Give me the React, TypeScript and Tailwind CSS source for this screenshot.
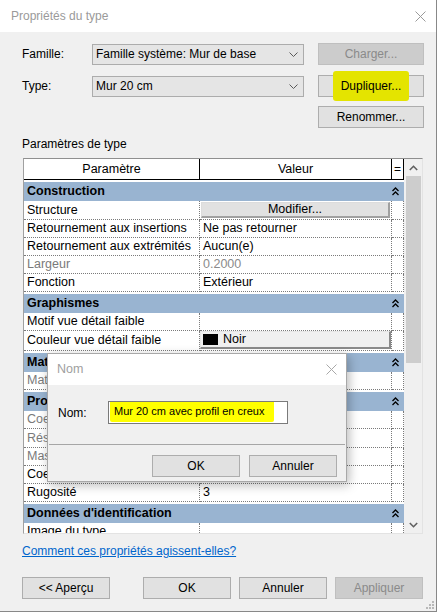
import React from 'react'

// petites icônes dessinées à la main
const CloseX = ({ color = '#9a9a9a' }: { color?: string }) => (
  <svg width="11" height="11" viewBox="0 0 11 11">
    <path d="M0.5 0.5 L10.5 10.5 M10.5 0.5 L0.5 10.5" stroke={color} strokeWidth="1" fill="none" />
  </svg>
)

const ChevronDown = () => (
  <svg width="9" height="5" viewBox="0 0 9 5">
    <path d="M0.5 0.5 L4.5 4.5 L8.5 0.5" stroke="#5a5a5a" strokeWidth="1" fill="none" />
  </svg>
)

const DoubleUp = () => (
  <svg width="7" height="9" viewBox="0 0 7 9">
    <path d="M0.5 4 L3.5 1 L6.5 4 M0.5 8 L3.5 5 L6.5 8" stroke="#000" strokeWidth="1.3" fill="none" />
  </svg>
)

const ScrollArrow = ({ up }: { up?: boolean }) => (
  <svg width="9" height="6" viewBox="0 0 9 6">
    <path d={up ? 'M0.8 5 L4.5 1.3 L8.2 5' : 'M0.8 1 L4.5 4.7 L8.2 1'} stroke="#606060" strokeWidth="1.6" fill="none" />
  </svg>
)

function Button({
  children,
  disabled = false,
  className = '',
}: {
  children: React.ReactNode
  disabled?: boolean
  className?: string
}) {
  return (
    <div
      className={`flex items-center justify-center h-[22px] border text-[12px] whitespace-nowrap ${
        disabled ? 'bg-[#cccccc] border-[#bfbfbf] text-[#8a8a8a]' : 'bg-[#e1e1e1] border-[#adadad] text-black'
      } ${className}`}
    >
      {children}
    </div>
  )
}

function Select({ value }: { value: string }) {
  return (
    <div className="flex items-center justify-between w-[212px] h-[21px] bg-[#e5e5e5] border border-[#acacac] pl-[3px] pr-[5px] text-[12px]">
      <span>{value}</span>
      <ChevronDown />
    </div>
  )
}

type Row = {
  label: string
  value?: React.ReactNode
  gray?: boolean
  h: number
}

type Group = { title: string; h: number; rows: Row[] }

const groups: Group[] = [
  {
    title: 'Construction',
    h: 19,
    rows: [
      {
        label: 'Structure',
        h: 19,
        value: (
          <div className="mx-[1px] mt-[1px] h-[16px] bg-[#e1e1e1] border-t border-l border-[#dcdcdc] border-r-2 border-b-2 border-r-[#a0a0a0] border-b-[#a0a0a0] flex items-center justify-center">
            Modifier...
          </div>
        ),
      },
      { label: 'Retournement aux insertions', value: 'Ne pas retourner', h: 18 },
      { label: 'Retournement aux extrémités', value: 'Aucun(e)', h: 18 },
      { label: 'Largeur', value: '0.2000', gray: true, h: 18 },
      { label: 'Fonction', value: 'Extérieur', h: 18 },
    ],
  },
  {
    title: 'Graphismes',
    h: 19,
    rows: [
      { label: 'Motif vue détail faible', value: '', h: 18 },
      {
        label: 'Couleur vue détail faible',
        h: 20,
        value: (
          <div className="h-[18px] bg-[#f0f0f0] border-t border-l border-[#e6e6e6] border-r-2 border-b-2 border-r-[#8a8a8a] border-b-[#8a8a8a] flex items-center pl-[2px]">
            <span className="w-[15px] h-[11px] bg-black mr-[5px]" />
            Noir
          </div>
        ),
      },
    ],
  },
  {
    title: 'Matériaux et finitions',
    h: 19,
    rows: [{ label: 'Matériau structurel', value: '', gray: true, h: 18 }],
  },
  {
    title: 'Propriétés analytiques',
    h: 19,
    rows: [
      { label: 'Coefficient de transfert de chaleur (U)', value: '', gray: true, h: 18 },
      { label: 'Résistance thermique (R)', value: '', gray: true, h: 19 },
      { label: 'Masse thermique', value: '', gray: true, h: 18 },
      { label: "Coefficient d'absorption", value: '0.700000', h: 18 },
      { label: 'Rugosité', value: '3', h: 18 },
    ],
  },
  {
    title: "Données d'identification",
    h: 19,
    rows: [{ label: 'Image du type', value: '', h: 18 }],
  },
]

function PropertyTable() {
  return (
    <div className="ml-[1px] w-[400px] h-[376px] border-t border-l border-t-[#8f8f8f] border-l-[#a0a0a0] border-r border-b border-r-[#e3e3e3] border-b-[#e3e3e3] bg-white flex overflow-hidden">
      <div className="w-[380px] h-full overflow-hidden text-[12.5px]">
        {/* en-tête */}
        <div className="flex h-[21px] border-b border-black">
          <div className="w-[176px] border-r border-black flex items-center justify-center">Paramètre</div>
          <div className="w-[192px] border-r border-black flex items-center justify-center">Valeur</div>
          <div className="w-[12px] border-r border-black flex items-center justify-center text-[12px] leading-none">=</div>
        </div>
        {groups.map((g) => (
          <div key={g.title}>
            <div
              className="mt-[2px] bg-[#99b4d1] flex items-center justify-between font-bold pl-[3px] pr-[5px] whitespace-nowrap"
              style={{ height: g.h }}
            >
              <span>{g.title}</span>
              <DoubleUp />
            </div>
            {g.rows.map((r) => (
              <div key={r.label} className="flex" style={{ height: r.h }}>
                <div
                  className={`w-[176px] border-r border-b border-dotted border-[#7a7a7a] pl-[3px] flex items-center whitespace-nowrap overflow-hidden ${
                    r.gray ? 'text-[#7a7a7a]' : 'text-black'
                  }`}
                >
                  {r.label}
                </div>
                <div
                  className={`w-[192px] border-r border-b border-dotted border-[#7a7a7a] whitespace-nowrap overflow-hidden ${
                    typeof r.value === 'string' ? 'pl-[3px] flex items-center' : ''
                  } ${r.gray ? 'text-[#8a8a8a]' : 'text-black'}`}
                >
                  {r.value}
                </div>
                <div className="w-[12px] border-r border-b border-dotted border-[#7a7a7a]" />
              </div>
            ))}
          </div>
        ))}
      </div>
      {/* barre de défilement */}
      <div className="w-[18px] h-full bg-[#f0f0f0] flex flex-col items-center">
        <div className="h-[17px] flex items-center justify-center pt-[1px]">
          <ScrollArrow up />
        </div>
        <div className="w-[15px] h-[187px] bg-[#cdcdcd]" />
        <div className="flex-1" />
        <div className="h-[17px] flex items-center justify-center">
          <ScrollArrow />
        </div>
      </div>
    </div>
  )
}

function NomDialog() {
  return (
    <div className="absolute left-[47px] top-[353px] w-[300px] h-[129px] border border-[#a8a8a8] bg-[#f0f0f0] shadow-[2px_3px_10px_rgba(0,0,0,0.28)] flex flex-col text-[12px]">
      <div className="h-[31px] bg-white flex items-center justify-between pl-[9px] pr-[9px]">
        <span className="text-[#a0a0a0] text-[12.5px]">Nom</span>
        <CloseX color="#a8a8a8" />
      </div>
      <div className="flex items-center mt-[16px] pl-[10px]">
        <span className="w-[50px]">Nom:</span>
        <div className="w-[180px] h-[23px] bg-white border border-[#7a7a7a] flex items-center pl-[1px] overflow-hidden whitespace-nowrap">
          <span className="bg-[#ffff00] pl-[4px] pr-[10px] py-[3px] -mt-[3px] text-[11px] rounded-[2px]">Mur 20 cm avec profil en creux</span>
        </div>
      </div>
      <div className="mt-[20px] mx-[1px] border-t border-[#a6a6a6]" />
      <div className="flex justify-end gap-[9px] pr-[9px] mt-[10px]">
        <Button className="w-[88px]">OK</Button>
        <Button className="w-[88px]">Annuler</Button>
      </div>
    </div>
  )
}

export default function App() {
  return (
    <div className="relative w-[440px] h-[613px] bg-white font-['Liberation_Sans',Arial,sans-serif] text-black">
      <div className="w-[437px] h-[612px] bg-[#f0f0f0] border-r border-b border-[#888888] flex flex-col">
        {/* barre de titre */}
        <div className="h-[32px] bg-white flex items-center justify-between pl-[11px] pr-[10px]">
          <span className="text-[12px] text-[#9a9a9a]">Propriétés du type</span>
          <CloseX />
        </div>

        <div className="pl-[22px] pt-[11px] text-[12px]">
          <div className="flex items-center h-[22px]">
            <span className="w-[70px]">Famille:</span>
            <Select value="Famille système: Mur de base" />
            <Button disabled className="ml-[14px] w-[106px]">Charger...</Button>
          </div>
          <div className="flex items-center h-[22px] mt-[10px]">
            <span className="w-[70px]">Type:</span>
            <Select value="Mur 20 cm" />
            <Button className="ml-[14px] w-[106px]">
              <span className="bg-[#e4e400] px-[8px] py-[6px] rounded-[3px]">Dupliquer...</span>
            </Button>
          </div>
          <div className="flex justify-start h-[22px] mt-[9px] pl-[296px]">
            <Button className="w-[106px]">Renommer...</Button>
          </div>

          <div className="mt-[8px] h-[16px] leading-[16px]">Paramètres de type</div>
          <div className="mt-[6px]">
            <PropertyTable />
          </div>

          <div className="mt-[9px] leading-[16px] text-[#0066cc] underline">Comment ces propriétés agissent-elles?</div>

          <div className="flex mt-[18px] w-[401px]">
            <Button className="w-[88px]">&lt;&lt; Aperçu</Button>
            <Button className="w-[88px] ml-[33px]">OK</Button>
            <Button className="w-[88px] ml-[8px]">Annuler</Button>
            <Button disabled className="w-[88px] ml-[8px]">Appliquer</Button>
          </div>
        </div>

        {/* poignée de redimensionnement */}
        <div className="flex-1 flex items-end justify-end pr-[2px] pb-[2px]">
          <div className="grid grid-cols-3 gap-[1px] w-[8px] h-[8px]">
            <span />
            <span />
            <span className="w-[2px] h-[2px] bg-[#b8b8b8]" />
            <span />
            <span className="w-[2px] h-[2px] bg-[#b8b8b8]" />
            <span className="w-[2px] h-[2px] bg-[#b8b8b8]" />
            <span className="w-[2px] h-[2px] bg-[#b8b8b8]" />
            <span className="w-[2px] h-[2px] bg-[#b8b8b8]" />
            <span className="w-[2px] h-[2px] bg-[#b8b8b8]" />
          </div>
        </div>
      </div>
      <NomDialog />
    </div>
  )
}
